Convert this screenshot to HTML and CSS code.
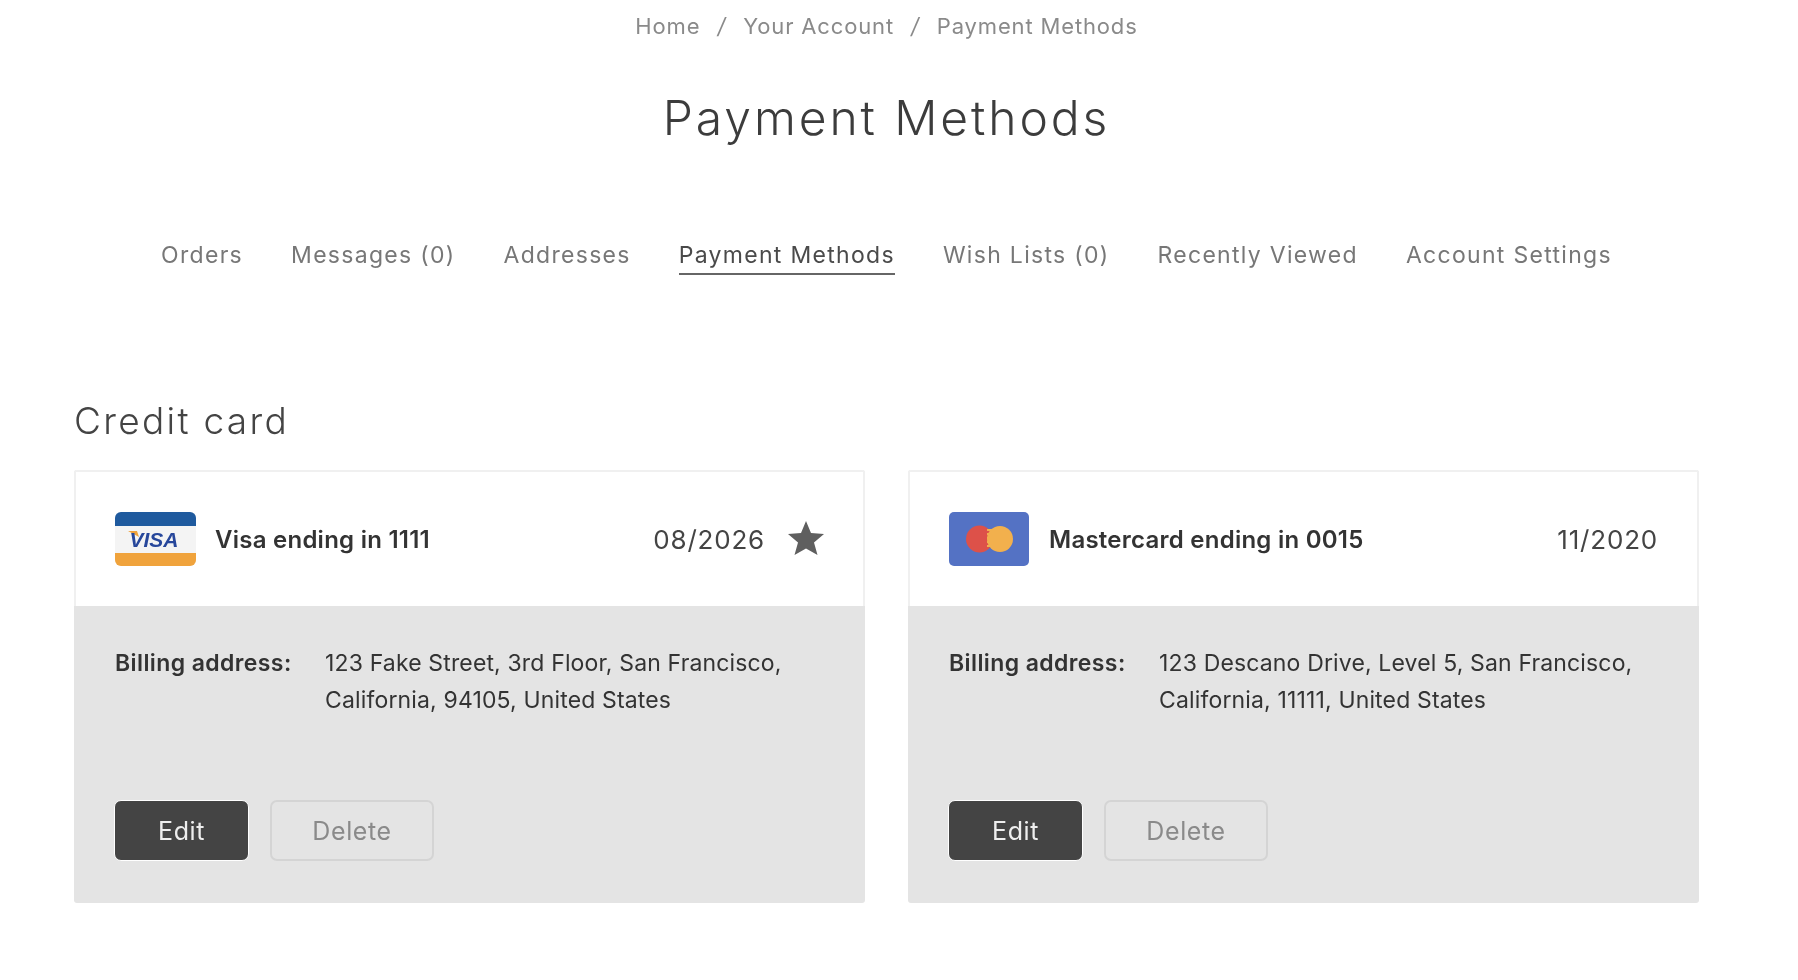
FILE: index.html
```html
<!DOCTYPE html>
<html lang="en">
<head>
<meta charset="utf-8">
<title>Payment Methods</title>
<link rel="stylesheet" href="styles.css">
</head>
<body>
<main class="page">
  <nav class="crumbs">
    <a>Home</a><span class="sep">/</span><a>Your Account</a><span class="sep">/</span><a>Payment Methods</a>
  </nav>
  <h1 class="title">Payment Methods</h1>
  <nav class="tabs">
    <a class="tab">Orders</a>
    <a class="tab">Messages (0)</a>
    <a class="tab">Addresses</a>
    <a class="tab active">Payment Methods</a>
    <a class="tab">Wish Lists (0)</a>
    <a class="tab">Recently Viewed</a>
    <a class="tab">Account Settings</a>
  </nav>
  <h2 class="section">Credit card</h2>
  <section class="cards">
    <article class="card">
      <header class="card-head">
        <svg class="brand" viewBox="0 0 81 54" aria-hidden="true">
          <defs><clipPath id="v"><rect width="81" height="54" rx="6"/></clipPath></defs>
          <g clip-path="url(#v)">
            <rect width="81" height="54" fill="#f4f4f4"/>
            <rect width="81" height="14" fill="#1f5a9e"/>
            <rect y="41" width="81" height="13" fill="#f0a33c"/>
          </g>
          <path d="M13 19 L22 19 L24 25 Z" fill="#f0a33c"/>
          <text x="39" y="35" class="visa-text" text-anchor="middle">VISA</text>
        </svg>
        <span class="name">Visa ending in 1111</span>
        <span class="expiry">08/2026</span>
        <svg class="star" viewBox="0 0 36 36" aria-hidden="true"><path d="M18 0 L23 12 L36 13 L26 21.500 L29.500 34 L18 27.500 L6.500 34 L10 21.500 L0 13 L13 12 Z" fill="#5f5f5f"/></svg>
      </header>
      <div class="card-body">
        <div class="billing">
          <strong class="label">Billing address:</strong>
          <p class="address">123 Fake Street, 3rd Floor, San Francisco, California, 94105, United States</p>
        </div>
        <div class="actions"><button class="btn primary">Edit</button><button class="btn ghost">Delete</button></div>
      </div>
    </article>
    <article class="card">
      <header class="card-head">
        <svg class="brand" viewBox="0 0 81 54" aria-hidden="true">
          <rect width="80" height="54" rx="5" fill="#5472c4"/>
          <circle cx="30.500" cy="27" r="13.500" fill="#dd5149"/>
          <circle cx="51" cy="27" r="13" fill="#f2b04d"/>
          <path d="M38 18h5M38 22h5M38 26h5M38 30h5M38 34h5" stroke="#f2b04d" stroke-width="2"/>
        </svg>
        <span class="name">Mastercard ending in 0015</span>
        <span class="expiry">11/2020</span>
      </header>
      <div class="card-body">
        <div class="billing">
          <strong class="label">Billing address:</strong>
          <p class="address">123 Descano Drive, Level 5, San Francisco, California, 11111, United States</p>
        </div>
        <div class="actions"><button class="btn primary">Edit</button><button class="btn ghost">Delete</button></div>
      </div>
    </article>
  </section>
</main>
</body>
</html>
```
FILE: styles.css
```css
* { box-sizing: border-box; }
html, body { margin: 0; background: #fff; }
body { font-family: Inter, "Noto Sans", sans-serif; color: #333; height: 980px; overflow: hidden; }
.page { padding: 0 99px 0 74px; filter: blur(.45px); }
.crumbs { display: flex; justify-content: center; align-items: center; height: 26px; margin-top: 13px; font-size: 22px; color: #8a8a8a; letter-spacing: .85px; }
.sep { margin: 0 17px; font-style: italic; }
.title { margin: 49px 0 0; text-align: center; font-weight: 300; font-size: 48px; line-height: 60px; color: #3c3c3c; letter-spacing: 2.9px; }
.tabs { display: flex; justify-content: center; gap: 48px; margin-top: 89px; font-size: 23px; color: #777; }
.tab { height: 38px; line-height: 36px; letter-spacing: 1.3px; }
.active { color: #4a4a4a; border-bottom: 2px solid #666; }
.section { margin: 124px 0 0; font-weight: 300; font-size: 37px; line-height: 44px; color: #444; letter-spacing: 2.3px; }
.cards { display: grid; grid-template-columns: 791px 791px; gap: 43px; margin-top: 27px; }
.card { height: 433px; display: flex; flex-direction: column; background: #e4e4e4; border-radius: 3px; overflow: hidden; }
.card-head { height: 136px; flex: none; display: flex; align-items: center; padding: 0 39px 0 40px; background: #fff; border: 2px solid #f0f0f0; border-bottom: 0; }
.brand { width: 81px; height: 54px; flex: none; margin-left: -1px; }
.visa-text { font-family: "Liberation Sans", sans-serif; font-weight: 700; font-style: italic; font-size: 21px; fill: #27479b; }
.name { margin-left: 19px; font-size: 24px; font-weight: 600; color: #333; letter-spacing: .25px; }
.expiry { margin-left: auto; font-size: 26px; color: #444; letter-spacing: .8px; }
.star { width: 36px; height: 36px; margin-left: 23px; }
.card-body { flex: 1; display: flex; flex-direction: column; padding: 39px 40px 42px 41px; }
.billing { display: flex; font-size: 23px; line-height: 36.500px; color: #333; letter-spacing: .15px; }
.label { flex: none; width: 210px; font-weight: 600; letter-spacing: .4px; }
.address { margin: 0; max-width: 480px; }
.actions { margin: auto 0 0 -1px; display: flex; gap: 21px; }
.btn { height: 61px; border-radius: 7px; font-family: Inter, sans-serif; font-size: 25px; letter-spacing: .6px; cursor: pointer; }
.primary { width: 135px; background: #444; border: 1px solid #fff; color: #eee; }
.ghost { width: 164px; background: transparent; border: 2px solid #d4d4d4; color: #8a8a8a; }
```
